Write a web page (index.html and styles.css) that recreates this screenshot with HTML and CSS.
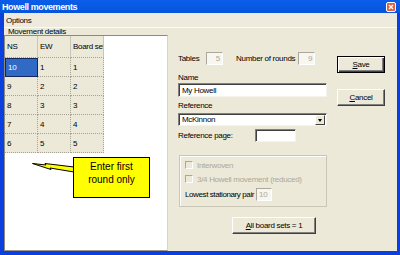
FILE: index.html
```html
<!DOCTYPE html>
<html lang="en">

<head>
    <meta charset="UTF-8">
    <title>Howell movements</title>
    <link rel="stylesheet" href="styles.css">
</head>

<body>
    <div class="window">
        <div class="titlebar">
            <span class="title">Howell movements</span>
            <svg class="close" width="10" height="10" viewBox="0 0 10 10">
                <rect x="0.5" y="0.5" width="9" height="9" rx="1.5" fill="#e2603c" stroke="#fff"/>
                <path d="M3 3 L7 7 M7 3 L3 7" stroke="#fff" stroke-width="1.4"/>
            </svg>
        </div>
        <div class="frame">
            <div class="menubar"><span>Options</span></div>
            <div class="content">
                <div class="left">
                    <div class="legend">Movement details</div>
                    <div class="gridbox">
                        <div class="grid">
                            <div class="head">NS</div>
                            <div class="head">EW</div>
                            <div class="head">Board set</div>
                            <div class="cell selected">10</div><div class="cell">1</div><div class="cell">1</div>
                            <div class="cell">9</div><div class="cell">2</div><div class="cell">2</div>
                            <div class="cell">8</div><div class="cell">3</div><div class="cell">3</div>
                            <div class="cell">7</div><div class="cell">4</div><div class="cell">4</div>
                            <div class="cell">6</div><div class="cell">5</div><div class="cell">5</div>
                        </div>
                        <!-- note bubble over the grid -->
                        <svg class="tail" width="44" height="14" viewBox="0 0 44 14">
                            <polygon points="0.5,1.5 14,3 13,1.5 42,5 42,10 18,6 19,7.5" fill="#ffff00" stroke="#000" stroke-width="1"/>
                        </svg>
                        <div class="callout">Enter first<br>round only</div>
                    </div>
                </div>

                <div class="form">
                    <div class="row tables">
                        <span class="lbl-tables">Tables</span>
                        <span class="box disabled num">5</span>
                        <span class="lbl-rounds">Number of rounds</span>
                        <span class="box disabled num">9</span>
                    </div>
                    <div class="label name-label">Name</div>
                    <div class="box edit">My Howell</div>
                    <div class="label ref-label">Reference</div>
                    <div class="box edit select">
                        <span>McKinnon</span>
                        <span class="arrow"></span>
                    </div>
                    <div class="row refpage">
                        <span class="lbl-page">Reference page:</span>
                        <span class="box edit page"></span>
                    </div>
                    <div class="group">
                        <div class="check"><span class="cb"></span>Interwoven</div>
                        <div class="check"><span class="cb"></span>3/4 Howell movement (reduced)</div>
                        <div class="row lowest">
                            <span class="lbl-lowest">Lowest stationary pair</span>
                            <span class="box disabled small">10</span>
                        </div>
                    </div>
                    <button class="btn allsets"><u>A</u>ll board sets = 1</button>
                </div>

                <div class="buttons">
                    <button class="btn default"><u>S</u>ave</button>
                    <button class="btn cancel"><u>C</u>ancel</button>
                </div>
            </div>
        </div>
    </div>
</body>

</html>
```

FILE: styles.css
```css
body {
    margin: 0;
    background-color: #ece9d8;
    font-family: "Liberation Sans", Arial, sans-serif;
    font-size: 8px;
    letter-spacing: -0.3px;
    color: #000;
    white-space: nowrap;
}

.window {
    width: 400px;
    height: 255px;
    display: flex;
    flex-direction: column;
    background-color: #ece9d8;
    overflow: hidden;
}

.titlebar {
    height: 13px;
    flex: none;
    display: flex;
    align-items: center;
    justify-content: space-between;
    padding: 0 4px 0 2px;
    background: linear-gradient(#0b5ee9, #0554dc);
    color: white;
}

.title {
    font-weight: bold;
    font-size: 9px;
    letter-spacing: -0.4px;
}

.frame {
    flex: 1;
    display: flex;
    flex-direction: column;
    border-left: 4px solid #0b40df;
    border-right: 3px solid #0b40df;
    border-bottom: 4px solid #0b40df;
    min-height: 0;
}

.menubar {
    height: 14px;
    flex: none;
    display: flex;
    align-items: center;
    padding-left: 2px;
    border-bottom: 1px solid #fbfaf5;
    background-color: #eeebde;
}

.content {
    flex: 1;
    display: flex;
    min-height: 0;
}

/* left side: grid */

.left {
    width: 164px;
    display: flex;
    flex-direction: column;
}

.legend {
    height: 7px;
    line-height: 7px;
    padding-left: 4px;
}

.gridbox {
    flex: 1;
    position: relative;
    background-color: white;
    border: 1px solid;
    border-color: #8c8a80 #d8d5c8 #9a988e #8c8a80;
}

.grid {
    display: grid;
    grid-template-columns: 33px 33px 33px;
    grid-template-rows: 22px repeat(5, 19px);
    width: 99px;
}

.head,
.cell {
    display: flex;
    align-items: center;
    padding-left: 2px;
    box-sizing: border-box;
    background-color: #ece9d8;
    border-bottom: 1px dotted #a5a293;
    overflow: hidden;
}

.head {
    border-right: 1px solid #c9c6b6;
}

.cell {
    border-right: 1px dotted #a5a293;
}

.cell.selected {
    background-color: #316ac5;
    color: white;
    border: 1px solid #14275c;
}

.tail {
    position: absolute;
    left: 27px;
    top: 126px;
}

.callout {
    position: absolute;
    left: 68px;
    top: 121px;
    width: 77px;
    height: 41px;
    box-sizing: border-box;
    border: 1px solid #000;
    background-color: #ffff00;
    font-size: 10px;
    letter-spacing: 0;
    line-height: 13px;
    text-align: center;
    padding-top: 2px;
}

/* middle: form */

.form {
    width: 149px;
    margin-left: 10px;
    display: flex;
    flex-direction: column;
}

.row {
    display: flex;
    align-items: center;
}

.tables {
    margin-top: 24px;
    height: 13px;
}

.lbl-tables {
    width: 28px;
}

.lbl-rounds {
    margin-left: 13px;
    margin-right: 3px;
}

.box {
    box-sizing: border-box;
    display: flex;
    align-items: center;
    padding: 0 2px;
}

.disabled {
    height: 13px;
    width: 17px;
    background-color: #f7f6f1;
    color: #aca899;
    border: 1px solid;
    border-color: #aca899 #fff #fff #aca899;
}

.num {
    justify-content: flex-end;
}

.edit {
    height: 14px;
    background-color: white;
    border: 1px solid;
    border-color: #808080 #f4f3ee #f4f3ee #808080;
    box-shadow: inset 1px 1px 0 #404040;
    padding-left: 3px;
}

.label {
    height: 9px;
    line-height: 9px;
}

.name-label {
    margin-top: 8px;
    margin-bottom: 1px;
}

.ref-label {
    margin-top: 4px;
    margin-bottom: 3px;
}

.select {
    height: 13px;
    justify-content: space-between;
    padding-right: 1px;
}

.arrow {
    width: 10px;
    height: 10px;
    box-sizing: border-box;
    background-color: #ece9d8;
    border: 1px solid;
    border-color: #fff #404040 #404040 #fff;
    position: relative;
}

.arrow::after {
    content: "";
    position: absolute;
    left: 2px;
    top: 3px;
    border-left: 2.5px solid transparent;
    border-right: 2.5px solid transparent;
    border-top: 3px solid #000;
}

.refpage {
    margin-top: 3px;
    height: 13px;
}

.lbl-page {
    width: 77px;
}

.page {
    width: 41px;
    height: 13px;
}

.group {
    margin-top: 13px;
    margin-left: 1px;
    width: 148px;
    box-sizing: border-box;
    border: 1px solid #c9c6b6;
    box-shadow: inset 1px 1px 0 #fff;
    padding: 4px 5px 5px;
    color: #aca899;
}

.check {
    height: 10px;
    display: flex;
    align-items: center;
    margin-bottom: 4px;
}

.cb {
    width: 8px;
    height: 8px;
    box-sizing: border-box;
    border: 1px solid;
    border-color: #aca899 #fff #fff #aca899;
    background-color: #ece9d8;
    margin-right: 4px;
}

.lowest {
    margin-top: 1px;
    height: 13px;
    color: #000;
}

.lbl-lowest {
    margin-right: 2px;
    letter-spacing: -0.4px;
}

.small {
    width: 16px;
}

.btn {
    font: inherit;
    letter-spacing: inherit;
    color: #000;
    background-color: #ece9d8;
    border: 1px solid;
    border-color: #fff #404040 #404040 #fff;
    box-shadow: inset -1px -1px 0 #808080;
    padding: 0;
    height: 17px;
}

.allsets {
    margin-top: 10px;
    margin-left: 54px;
    width: 84px;
}

/* right: buttons */

.buttons {
    width: 48px;
    margin-left: 10px;
    display: flex;
    flex-direction: column;
}

.buttons .btn {
    width: 48px;
}

.default {
    margin-top: 28px;
    border-color: #000;
    box-shadow: inset 1px 1px 0 #fff, inset -1px -1px 0 #404040, inset -2px -2px 0 #808080;
}

.cancel {
    margin-top: 16px;
}
```
